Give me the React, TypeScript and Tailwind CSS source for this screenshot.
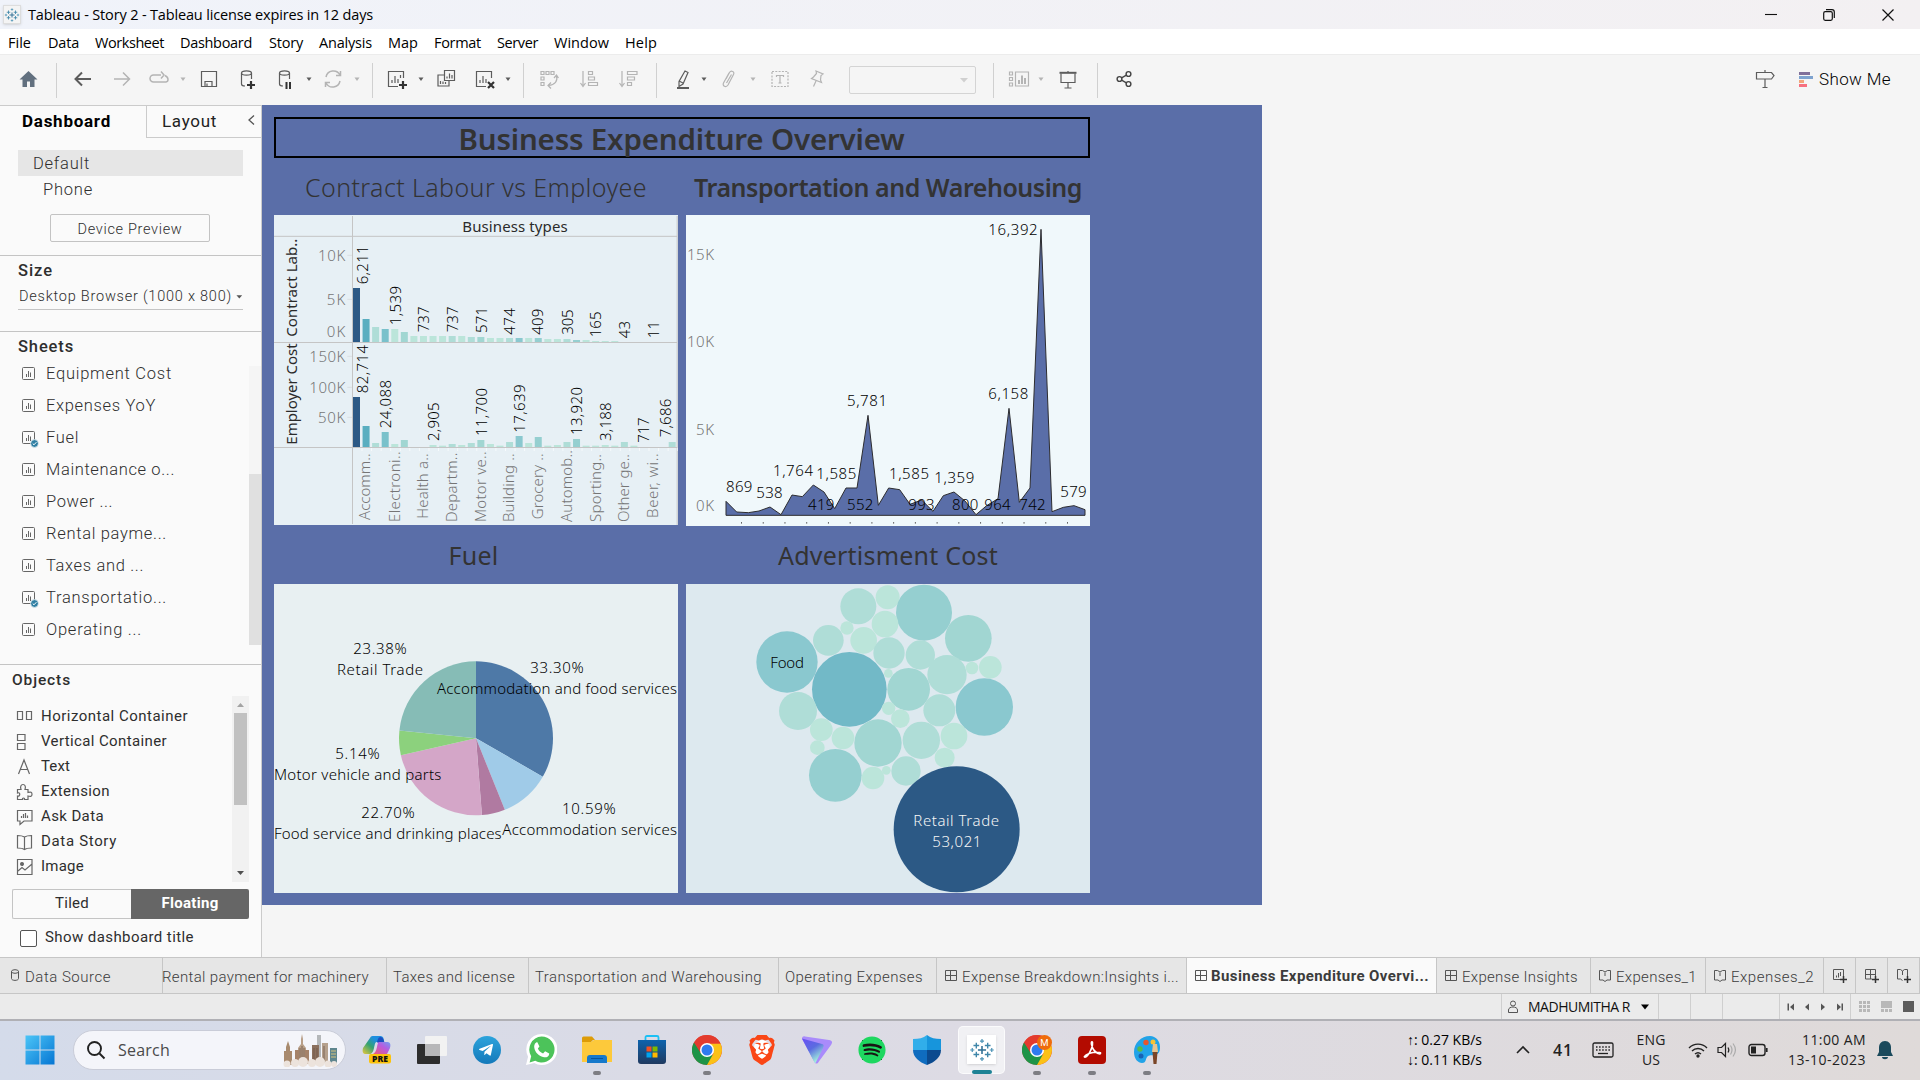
import React, { useLayoutEffect, useRef, useState } from "react";
import { FaSpotify, FaTelegramPlane } from "react-icons/fa";
import { SiBrave } from "react-icons/si";

/* Single-line label whose tracking is adjusted so that it fills `w` pixels. */
function Fit({ w, className = "", children }: { w: number; className?: string; children: string }) {
  const ref = useRef<HTMLSpanElement>(null);
  const [spacing, setSpacing] = useState(0);
  useLayoutEffect(() => {
    const el = ref.current;
    if (!el) return;
    el.style.letterSpacing = "0px";
    const natural = el.getBoundingClientRect().width;
    const s = (w - natural) / children.length;
    el.style.letterSpacing = `${s}px`;
    setSpacing(s);
  }, [w, children]);
  return (
    <span ref={ref} className={`inline-block shrink-0 whitespace-nowrap ${className}`} style={{ letterSpacing: spacing }}>
      {children}
    </span>
  );
}

/* ---------- toolbar ---------- */

function Ico({ ml, dim, children }: { ml: string; dim?: boolean; children: React.ReactNode }) {
  return (
    <svg
      viewBox="0 0 24 24"
      className={`mb-0.5 h-6 w-6 shrink-0 ${ml} ${dim ? "text-[#b4b4b4]" : "text-[#5c5c5c]"}`}
      fill="none"
      stroke="currentColor"
      strokeWidth="1.2"
    >
      {children}
    </svg>
  );
}

function Caret({ ml, dim }: { ml: string; dim?: boolean }) {
  return (
    <svg viewBox="0 0 8 8" className={`mb-0.5 h-2 w-2 shrink-0 ${ml} ${dim ? "text-[#b4b4b4]" : "text-[#5c5c5c]"}`}>
      <path d="M1.500 2.500h5L4 6z" fill="currentColor" />
    </svg>
  );
}

function Sep({ ml }: { ml: string }) {
  return <div className={`h-[35px] w-px shrink-0 bg-[#d0d0d0] ${ml}`} />;
}

function Cylinder() {
  return (
    <>
      <ellipse cx="11.500" cy="6" rx="5" ry="2.200" />
      <path d="M6.500 6v11c0 1.500 1.500 2 3.500 2M16.500 6v6" />
    </>
  );
}

function Toolbar() {
  return (
    <div className="flex h-[51px] shrink-0 items-center border-t border-[#ececec] bg-[#f5f5f5]">
      <svg viewBox="0 0 24 24" className="mb-0.5 ml-4 h-6 w-6 shrink-0">
        <path d="M12.500 4l9 8.500h-3v7.500h-4.500v-5.500h-3v5.500H6.500v-7.500h-3z" fill="#62707f" />
      </svg>
      <Sep ml="ml-4" />
      <Ico ml="ml-3.5"><path strokeWidth="2" d="M20 12H5M11 5.500L4.500 12l6.500 6.500" /></Ico>
      <Ico ml="ml-[15px]" dim><path strokeWidth="1.500" d="M4 12h15M13 5.500l6.500 6.500-6.500 6.500" /></Ico>
      <Ico ml="ml-[13px]" dim><path strokeWidth="1.500" d="M14 8H6.500a3.500 3.500 0 000 7h12.500a2.500 2.500 0 002-2.500c0-2-1-3-3-4M14 4.500L17 8l-3 3.500" /></Ico>
      <Caret ml="ml-2" dim />
      <Ico ml="ml-2.5"><path d="M4.500 4.500h15v15h-15zM8 19v-4.500h7V19M10 16.500V19" /></Ico>
      <Ico ml="ml-[14px]"><Cylinder /><path strokeWidth="2.200" stroke="#333" d="M16 14v8M12 18h8" /></Ico>
      <Ico ml="ml-3.5"><Cylinder /><path strokeWidth="2" stroke="#333" d="M13.500 15v7M17 15v7" /></Ico>
      <Caret ml="ml-[8px]" />
      <Ico ml="ml-2" dim><path strokeWidth="1.500" d="M5 10a7.500 7.500 0 0114-2M19 14a7.500 7.500 0 01-14 2M19.500 4v4.500H15M4.500 20v-4.500H9" /></Ico>
      <Caret ml="ml-2" dim />
      <Sep ml="ml-[11px]" />
      <Ico ml="ml-3"><path d="M18.500 11V4.500h-15v15H13M7 16v-3M10 16V9M13 16v-4M15.500 11V8" /><path strokeWidth="2.200" stroke="#333" d="M18 14v8M14 18h8" /></Ico>
      <Caret ml="ml-2" />
      <Ico ml="ml-[9px]"><path d="M10.500 3.500h10v10h-10zM10 8H4v11h11v-5M13 11.500v-2M15.500 11.500V6.500M18 11.500V8M6.500 17v-3M9 17v-2.500M11.500 17v-2" /></Ico>
      <Ico ml="ml-[15px]"><path d="M18.500 11V4.500h-15v15H13M7 16v-3M10 16V9M13 16v-4" /><path strokeWidth="2.200" stroke="#333" d="M15 15l6 6M21 15l-6 6" /></Ico>
      <Caret ml="ml-[7px]" />
      <Sep ml="ml-[11px]" />
      <Ico ml="ml-[13px]" dim><path d="M4 4.500h3v3H4zM9 4.500h3v3H9zM14 4.500h3v3h-3zM4 10h3v3H4zM4 15.500h3v3H4zM19.500 9c1.500 5-1.500 9-8 9.500M14 15.500l-3 3 3 3M17 11l2.500-3 2 3" /></Ico>
      <Ico ml="ml-4" dim><path d="M6 4v14M3.500 16l2.500 3.500L8.500 16M11.500 4.500h4v3h-4zM11.500 10h6v3h-6zM11.500 15.500h9v3h-9z" /></Ico>
      <Ico ml="ml-[15px]" dim><path d="M6 4v14M3.500 16l2.500 3.500L8.500 16M11.500 4.500h9.500v3h-9.500zM11.500 10h7v3h-7zM11.500 15.500h4v3h-4z" /></Ico>
      <Sep ml="ml-4" />
      <Ico ml="ml-3.5"><path d="M14 4l3 1.500-5 11.500-4 2.500v-5zM8 14l4 2" /><path strokeWidth="2" d="M6 21h12" /></Ico>
      <Caret ml="ml-[5px]" />
      <Ico ml="ml-[9px]" dim><path d="M9 12l3.500-6.500c1.500-2.500 5.500-1 4 2L11 18c-2 3-6 1-4.500-2L12 6M9.500 16l5-8.500" /></Ico>
      <Caret ml="ml-2" dim />
      <Ico ml="ml-[11px]" dim>
        <path strokeDasharray="2 1.300" d="M4 4.500h16v15H4z" />
        <path d="M8.500 10V8.500h7V10M12 8.500v7.500M10.500 16h3" />
      </Ico>
      <Ico ml="ml-[13px]" dim><path d="M11 4l7 3-2 1.500-.5 4.500 1 2.500-10-4 2-1.500 3-3.500zM11 14l-2.500 5.500" /></Ico>
      <div className="ml-5 flex h-7 w-[127px] shrink-0 items-center justify-end rounded-[2px] border border-[#d4d4d4] pr-[7px] text-[#d0d0d0]">
        <svg viewBox="0 0 8 8" className="h-2 w-2"><path d="M0 2h8L4 6.500z" fill="currentColor" /></svg>
      </div>
      <Sep ml="ml-[17px]" />
      <Ico ml="ml-[13px]" dim><path d="M2.500 5h3v3h-3zM2.500 10.500h3v3h-3zM2.500 16h3v3h-3zM8.500 5h13v14h-13z" /><path strokeWidth="2" d="M12 17v-4M15 17V8.500M18 17v-6" /></Ico>
      <Caret ml="ml-1.5" dim />
      <Ico ml="ml-[11px]"><path d="M5 6.500v9h14v-9M12 15.500V21M8.500 21h7" /><path strokeWidth="2" d="M3.500 5.800h17" /><path d="M12 4v2" /></Ico>
      <Sep ml="ml-[17px]" />
      <Ico ml="ml-3.5"><g stroke="#444" strokeWidth="1.400"><circle cx="7.500" cy="12" r="2.400" /><circle cx="16.500" cy="7" r="2.400" /><circle cx="16.500" cy="17" r="2.400" /><path d="M9.600 10.800l4.800-2.600M9.600 13.200l4.800 2.600" /></g></Ico>
      <Ico ml="ml-auto"><path d="M3.500 5.500h15l2.500 3-2.500 3.500h-15zM12 3v2.500M12 12v8.500M9.500 20.500h5" /></Ico>
      <div className="mb-0.5 ml-[22px] flex w-3.5 shrink-0 flex-col gap-px">
        <div className="h-[3px] w-[11px] bg-[#80709a]" />
        <div className="h-[3px] w-3.5 bg-[#7ea3cf]" />
        <div className="h-[3px] w-[5px] bg-[#f2a57a]" />
        <div className="h-[3px] w-2 bg-[#f7707f]" />
      </div>
      <Fit w={72} className="mb-px ml-1.5 mr-[29px] font-[Roboto] text-[17px] font-light text-black">Show Me</Fit>
    </div>
  );
}

/* ---------- side panel ---------- */

const sheets: [string, number, boolean?][] = [
  ["Equipment Cost", 126],
  ["Expenses YoY", 110],
  ["Fuel", 33, true],
  ["Maintenance o...", 129],
  ["Power ...", 67],
  ["Rental payme...", 121],
  ["Taxes and ...", 98],
  ["Transportatio...", 121, true],
  ["Operating ...", 96],
];

function SheetIcon({ used }: { used?: boolean }) {
  return (
    <svg viewBox="0 0 18 18" className="h-[18px] w-[18px] shrink-0" fill="none" stroke="#666">
      <rect x="1.500" y="1.500" width="12" height="12" rx="1" />
      <path d="M5.500 11V8M7.500 11V5M9.500 11V6.500" />
      {used && (
        <>
          <circle cx="13.500" cy="13.500" r="3.900" fill="#2f7fa3" stroke="#fafafa" strokeWidth="0.700" />
          <path d="M11.700 13.500l1.300 1.300 2.400-2.600" stroke="#fff" />
        </>
      )}
    </svg>
  );
}

const objects: [string, number, React.ReactNode][] = [
  ["Horizontal Container", 147, <path key="h" d="M1.500 3.500h5v8h-5zM10.500 3.500h5v8h-5z" />],
  ["Vertical Container", 126, <path key="v" d="M1.500 1.500h7.500v6h-7.500zM1.500 10.500h7.500v6h-7.500z" />],
  ["Text", 29, <path key="t" d="M2.500 16L8 2l5.500 14M4.500 11.500h7" />],
  ["Extension", 69, <path key="e" d="M1.500 6.500H5c-1-3 0-5 2-5s3 2 2 5h3v3c3-1 4 0 4 1.800s-1 2.700-4 1.700v3.500H8.500c.5-2-2.500-2-2 0h-5v-3.500c3 1 3-4.500 0-3z" />],
  ["Ask Data", 63, <path key="a" d="M1.500 2.500h14.500v10.500H8l-4 3.500V13H1.500zM5.500 10V8M7.500 10V6M9.500 10V5M11.500 10V7.500" />],
  ["Data Story", 76, <path key="d" d="M8.500 4v12M8.500 4C6 2.500 4 2.500 1.500 2.500V15c3 0 5 0 7 1.500 2-1.500 4-1.500 7-1.500V2.500c-2.500 0-4.500 0-7 1.500z" />],
  ["Image", 43, <g key="i"><path d="M1.500 1.500h14.500v15H1.500zM2 13l4-3.500 3 2.500 7-6" /><circle cx="6" cy="6" r="1.400" fill="#666" /></g>],
];

function SidePanel() {
  return (
    <div className="flex h-[852px] w-[262px] shrink-0 flex-col border-r border-t border-[#cbcbcb] bg-[#fafafa] font-[Roboto] text-[#2e2e2e]">
      <div className="flex h-8 shrink-0">
        <div className="w-[146px] pl-[22px] pt-[3px]">
          <Fit w={89} className="text-[17px] font-bold leading-6 text-black">Dashboard</Fit>
        </div>
        <div className="flex flex-1 items-center border-b border-l border-[#cbcbcb] pl-[15px]">
          <Fit w={55} className="mt-px text-[17px] font-normal text-[#222]">Layout</Fit>
          <svg viewBox="0 0 8 12" className="mb-1 ml-[30px] h-3 w-2" fill="none" stroke="#555" strokeWidth="1.300"><path d="M7 1.500L2 6l5 4.500" /></svg>
        </div>
      </div>
      <div className="ml-[18px] mt-3 flex h-[26px] w-[225px] shrink-0 items-center bg-[#e6e6e6] pl-[15px] pt-[2px]">
        <Fit w={57} className="text-[16.500px] font-light">Default</Fit>
      </div>
      <div className="flex h-[26px] shrink-0 items-center pl-[43px] pt-[2px]">
        <Fit w={50} className="text-[16.500px] font-light">Phone</Fit>
      </div>
      <div className="ml-[50px] mt-3 flex h-7 w-40 shrink-0 items-center justify-center rounded-[2px] border border-[#c3c3c3] pt-[3px]">
        <Fit w={105} className="text-[14.500px] font-light">Device Preview</Fit>
      </div>
      <div className="mt-[13px] flex h-[76px] shrink-0 flex-col border-t border-[#c4c4c4] pl-[18px] pt-1">
        <Fit w={35} className="self-start text-[16.500px] font-medium leading-[22px]">Size</Fit>
        <div className="mt-[1px] flex h-[27px] w-[225px] items-center border-b border-[#c4c4c4] pl-px pt-[2px]">
          <Fit w={213} className="text-[14.500px] font-light">Desktop Browser (1000 x 800)</Fit>
          <svg viewBox="0 0 8 8" className="ml-1 h-2 w-2"><path d="M0.500 2h6.500L3.800 5.800z" fill="#555" /></svg>
        </div>
      </div>
      <div className="flex h-[333px] shrink-0 border-t border-[#c4c4c4]">
        <div className="w-[249px] pl-[18px] pt-[3px]">
          <Fit w={56} className="block text-[16.500px] font-medium leading-[22px]">Sheets</Fit>
          <div className="mt-[-1px] flex flex-col">
            {sheets.map(([name, w, used]) => (
              <div key={name} className="flex h-8 items-center pl-[3px]">
                <div className="mt-[2px]"><SheetIcon used={used} /></div>
                <Fit w={w} className="ml-[7px] text-[16.500px] font-light">{name}</Fit>
              </div>
            ))}
          </div>
        </div>
        <div className="mt-[34px] h-[279px] w-3 bg-[#f5f5f5] pt-[108px]">
          <div className="h-[171px] bg-[#e0e0e0]" />
        </div>
      </div>
      <div className="flex shrink-0 flex-col border-t border-[#c4c4c4] pl-3">
        <Fit w={59} className="mt-1 self-start text-[15.500px] font-medium leading-[22px]">Objects</Fit>
        <div className="mt-[5px] flex h-[186px]">
          <div className="flex w-[220px] flex-col pl-1 pt-[8px]">
            {objects.map(([name, w, icon]) => (
              <div key={name} className="flex h-[25px] items-center">
                <svg viewBox="0 0 18 18" className="h-[18px] w-[18px] shrink-0" fill="none" stroke="#666" strokeWidth="1.200">{icon}</svg>
                <Fit w={w} className="ml-[7px] text-[15px]">{name}</Fit>
              </div>
            ))}
          </div>
          <div className="flex w-[17px] flex-col items-center justify-between bg-[#f1f1f1]">
            <svg viewBox="0 0 17 17" className="h-[17px] w-[17px]"><path d="M5 11h7L8.500 7z" fill="#a3a3a3" /></svg>
            <div className="mb-[60px] h-[92px] w-[13px] bg-[#c1c1c1]" />
            <svg viewBox="0 0 17 17" className="h-[17px] w-[17px]"><path d="M5 6h7l-3.500 4z" fill="#505050" /></svg>
          </div>
        </div>
        <div className="mt-[7px] flex h-[30px] w-[237px]">
          <div className="flex w-[119px] items-center justify-center rounded-l-[2px] border border-r-0 border-[#c4c4c4] pb-[2px]">
            <Fit w={34} className="text-[15px]">Tiled</Fit>
          </div>
          <div className="flex flex-1 items-center justify-center rounded-r-[2px] bg-[#666] pb-[2px]">
            <Fit w={57} className="text-[15px] font-bold text-white">Floating</Fit>
          </div>
        </div>
        <div className="mt-[9px] flex h-[20px] items-center pl-2">
          <div className="h-[17px] w-[17px] rounded-[2px] border border-[#555] bg-white" />
          <Fit w={149} className="mb-px ml-2 text-[15px]">Show dashboard title</Fit>
        </div>
      </div>
    </div>
  );
}

/* ---------- charts (each drawn at three units per pixel) ---------- */

const D = "#2c5985";
const C1 = "#5aaec0";
const C2 = "#79c1cb";
const C3 = "#8ac8cf";
const C4 = "#95cfd0";
const C5 = "#a1d6d2";
const C6 = "#afddd7";
const C7 = "#bbe5da";

const barColors = [D, C1, C6, C2, C7, C5, C7, C7, C7, C7, C6, C7, C6, C5, C7, C7, C6, C3, C7, C4, C7, C7, C6, C4, C7, C7, C7, C7, C6, C7, C7, C7, C7, C6];
const contract = [162, 69, 45, 39, 39, 30, 18, 18, 18, 18, 18, 18, 15, 15, 12, 12, 12, 12, 12, 12, 9, 9, 9, 6, 6, 3, 3, 3, 0, 0, 0, 0, 0, 0];
const employer = [150, 63, 12, 45, 9, 21, 0, 0, 6, 4, 9, 6, 12, 21, 9, 4, 15, 33, 12, 30, 4, 6, 15, 24, 4, 4, 6, 4, 15, 4, 0, 0, 0, 15];

type Mark = [string, number, number, number];

const contractMarks: Mark[] = [
  ["6,211", 326, 553, 117], ["1,539", 424, 676, 118], ["737", 509, 697, 78], ["737", 596, 697, 78], ["571", 684, 699, 78],
  ["474", 766, 704, 80], ["409", 852, 704, 78], ["305", 940, 704, 76], ["165", 1025, 712, 78], ["43", 1112, 715, 52], ["11", 1200, 715, 52],
];
const employerMarks: Mark[] = [
  ["82,714", 325, 880, 145], ["24,088", 394, 985, 145], ["2,905", 539, 1023, 116], ["11,700", 684, 1008, 144], ["17,639", 797, 998, 145],
  ["13,920", 968, 1005, 144], ["3,188", 1054, 1023, 116], ["717", 1170, 1028, 76], ["7,686", 1235, 1012, 116],
];
const categories: Mark[] = [
  ["Accomm..", 333, 1260, 200], ["Electroni..", 422, 1266, 212], ["Health a..", 507, 1256, 196], ["Departm..", 594, 1266, 208],
  ["Motor ve..", 681, 1266, 212], ["Building ..", 765, 1266, 206], ["Grocery ..", 852, 1258, 198], ["Automob..", 939, 1266, 216],
  ["Sporting..", 1025, 1266, 204], ["Other ge..", 1110, 1266, 204], ["Beer, wi..", 1196, 1254, 194],
];

function Vertical({ marks, fill }: { marks: Mark[]; fill: string }) {
  return (
    <>
      {marks.map(([t, x, y, len]) => (
        <text key={`${t}-${x}`} transform={`translate(${x - 2} ${y}) rotate(-90)`} fontSize="45" textLength={len} fill={fill}>{t}</text>
      ))}
    </>
  );
}

function LabourChart() {
  return (
    <svg viewBox="42 345 1212 930" className="h-[310px] w-[404px] bg-[#e7f0f5] font-['Noto_Sans'] font-[350]">
      <g stroke="#c5c5c5" strokeWidth="3">
        <path d="M42 409H1251M42 727.500H1251M42 1042.500H1251M277.500 348V1272M1251.500 348V1275" />
      </g>
      <path d="M262 466h14M262 598h14M262 769h14M262 862h14M262 952h14" stroke="#dadfe2" strokeWidth="3" />
      {barColors.map((c, i) => <path key={i} d={`M${306 + i * 28.7} 1044v9`} stroke="#fff" strokeWidth="2" />)}
      {barColors.map((c, i) => <rect key={i} x={279 + i * 28.7} y={726 - contract[i]} width="21" height={contract[i]} fill={c} />)}
      {barColors.map((c, i) => <rect key={i} x={279 + i * 28.7} y={1041 - employer[i]} width="21" height={employer[i]} fill={c} />)}
      <text x="607" y="396" fontSize="45" className="font-[450]" fill="#2b2b2b" textLength="316">Business types</text>
      <g fontSize="45" fill="#757575" textAnchor="end">
        <text x="256" y="482" textLength="82">10K</text>
        <text x="256" y="614" textLength="56">5K</text>
        <text x="256" y="710" textLength="56">0K</text>
        <text x="256" y="785" textLength="108">150K</text>
        <text x="256" y="878" textLength="108">100K</text>
        <text x="256" y="968" textLength="82">50K</text>
      </g>
      <g fontSize="45" className="font-[450]" fill="#2b2b2b">
        <text transform="translate(111 710) rotate(-90)" textLength="294">Contract Lab..</text>
        <text transform="translate(111 1034) rotate(-90)" textLength="304">Employer Cost</text>
      </g>
      <Vertical marks={contractMarks} fill="#000" />
      <Vertical marks={employerMarks} fill="#000" />
      <Vertical marks={categories} fill="#757575" />
    </svg>
  );
}

const areaLine =
  "168,1204 200,1236 235,1238 267,1233 300,1221 333,1244 366,1185 397,1190 430,1155 462,1176 494,1226 528,1164 561,1164 594,946 625,1216 656,1164 689,1169 720,1213 755,1200 789,1234 820,1187 852,1176 885,1203 918,1244 950,1217 984,1196 1017,925 1048,1207 1080,1164 1113,388 1146,1235 1180,1222 1212,1217 1245,1229 1245,1246 168,1246";

const areaMarks: Mark[] = [
  ["16,392", 955, 405, 148], ["6,158", 955, 897, 120], ["5,781", 531, 918, 120], ["1,764", 309, 1128, 120], ["1,585", 439, 1137, 120],
  ["1,585", 657, 1137, 120], ["1,359", 793, 1149, 120], ["869", 168, 1176, 79], ["538", 259, 1194, 79], ["579", 1171, 1191, 79],
  ["419", 414, 1230, 79], ["552", 531, 1230, 79], ["993", 715, 1230, 79], ["800", 846, 1230, 79], ["964", 943, 1230, 79], ["742", 1048, 1230, 79],
];

function TransportChart() {
  return (
    <svg viewBox="48 345 1212 933" className="h-[311px] w-[404px] bg-[#f0f8fb] font-['Noto_Sans'] font-[350]">
      <polygon points={areaLine} fill="#5a6ea8" stroke="#2d2d30" strokeWidth="3" strokeLinejoin="miter" strokeMiterlimit="2" />
      <g fontSize="45" fill="#757575">
        <text x="51" y="480" textLength="81">15K</text>
        <text x="51" y="741" textLength="81">10K</text>
        <text x="78" y="1005" textLength="54">5K</text>
        <text x="78" y="1233" textLength="54">0K</text>
      </g>
      {Array.from({ length: 16 }, (_, i) => <rect key={i} x={213 + i * 65.2} y="1266" width="3" height="5" fill="#666" />)}
      {areaMarks.map(([t, x, y, len]) => <text key={`${t}-${x}`} x={x} y={y} fontSize="45" textLength={len} fill="#000">{t}</text>)}
    </svg>
  );
}

const slices: [number, string][] = [
  [33.3, "#4e79a7"], [10.59, "#a0cbe8"], [4.89, "#b07aa1"], [22.7, "#d4a6c8"], [5.14, "#8cd17d"], [23.38, "#86bcb6"],
];

function arc(start: number, share: number) {
  const p = (f: number) => {
    const a = (f / 100) * Math.PI * 2;
    return `${648 + 231 * Math.sin(a)} ${625 - 231 * Math.cos(a)}`;
  };
  return `M648 625L${p(start)}A231 231 0 0 1 ${p(start + share)}Z`;
}

const pieMarks: Mark[] = [
  ["23.38%", 280, 372, 160], ["Retail Trade", 231, 435, 258], ["33.30%", 811, 429, 160], ["Accommodation and food services", 531, 492, 720],
  ["5.14%", 226, 687, 133], ["Motor vehicle and parts", 42, 750, 502], ["22.70%", 304, 864, 160], ["Food service and drinking places", 42, 928, 683],
  ["10.59%", 906, 852, 161], ["Accommodation services", 727, 915, 524],
];

function FuelChart() {
  let start = 0;
  return (
    <svg viewBox="42 162 1212 927" className="h-[309px] w-[404px] bg-[#e8f0f2] font-['Noto_Sans'] font-[350]">
      {slices.map(([share, color]) => {
        const d = arc(start, share);
        start += share;
        return <path key={color} d={d} fill={color} />;
      })}
      {pieMarks.map(([t, x, y, len]) => <text key={t} x={x} y={y} fontSize="45" textLength={len} fill="#000">{t}</text>)}
    </svg>
  );
}

const bubbles: [number, number, number, string][] = [
  [565, 229, 54, C6], [653, 202, 36, C7], [762, 248, 84, C4], [645, 282, 40, C7], [531, 294, 20, C7], [475, 331, 46, C6],
  [581, 331, 40, C7], [895, 325, 70, C5], [351, 396, 92, C3], [657, 369, 47, C6], [751, 375, 44, C6], [831, 434, 59, C6],
  [906, 414, 19, C7], [961, 412, 34, C7], [538, 478, 112, "#72b9c7"], [655, 430, 13, C7], [716, 478, 64, C5], [943, 531, 86, C3],
  [384, 543, 57, C6], [808, 541, 48, C6], [656, 535, 20, C7], [691, 566, 28, C7], [454, 599, 34, C7], [519, 624, 34, C7],
  [442, 653, 22, C7], [624, 639, 71, C5], [754, 631, 56, C6], [852, 618, 40, C7], [824, 683, 30, C7], [496, 736, 79, C4],
  [609, 744, 34, C7], [649, 721, 13, C7], [708, 723, 44, C6], [860, 898, 189, D],
];

function AdvertChart() {
  return (
    <svg viewBox="48 162 1212 927" className="h-[309px] w-[404px] bg-[#dde9ef] font-['Noto_Sans'] font-[350]">
      {bubbles.map(([x, y, r, c]) => <circle key={`${x}-${y}`} cx={x} cy={y} r={r} fill={c} />)}
      <text x="301" y="414" fontSize="45" textLength="101" fill="#000">Food</text>
      <text x="730" y="888" fontSize="45" textLength="257" fill="#f6f6f6">Retail Trade</text>
      <text x="787" y="951" fontSize="45" textLength="147" fill="#f6f6f6">53,021</text>
    </svg>
  );
}

function DashboardCanvas() {
  return (
    <div className="h-[800px] w-[1000px] shrink-0 bg-[#5a6ea8] pl-3 pt-3 font-['Noto_Sans'] text-[#333]">
      <div className="flex h-[41px] w-[816px] items-center justify-center border-2 border-black pr-px pt-[3px]">
        <Fit w={446} className="text-[29.500px] font-semibold leading-none">Business Expenditure Overview</Fit>
      </div>
      <div className="grid w-[816px] grid-cols-[404px_404px] gap-x-2">
        <div className="flex h-[57px] items-center justify-center pt-[3px]">
          <Fit w={342} className="text-[25px] font-light">Contract Labour vs Employee</Fit>
        </div>
        <div className="flex h-[57px] items-center justify-center pt-[3px]">
          <Fit w={388} className="text-[25px] font-semibold">Transportation and Warehousing</Fit>
        </div>
        <LabourChart />
        <TransportChart />
        <div className="flex h-[58px] items-center justify-center pr-[5px] pt-px">
          <Fit w={50} className="text-[25px]">Fuel</Fit>
        </div>
        <div className="flex h-[58px] items-center justify-center pt-px">
          <Fit w={220} className="text-[25px]">Advertisment Cost</Fit>
        </div>
        <FuelChart />
        <AdvertChart />
      </div>
    </div>
  );
}

/* ---------- worksheet tabs and status bar ---------- */

function GridGlyph() {
  return (
    <svg viewBox="0 0 12 12" className="h-3 w-3 shrink-0" fill="none" stroke="#555"><path d="M0.500 0.500h11v10h-11zM5.500 0.500V10.500M0.500 5.500h11" /></svg>
  );
}
function BookGlyph() {
  return (
    <svg viewBox="0 0 12 12" className="h-3 w-3 shrink-0" fill="none" stroke="#555"><path d="M0.500 0.500h3l2.500 1.500L8.500 0.500h3v9.500H8l-2 1.500L4 10H0.500zM6 2.500v3.500" /></svg>
  );
}

function Tab({ width, children, active }: { width: string; children: React.ReactNode; active?: boolean }) {
  return (
    <div className={`flex h-full shrink-0 items-center border-r border-[#c6c6c6] ${width} ${active ? "bg-[#fafafa]" : ""}`}>{children}</div>
  );
}

function SheetTabs() {
  return (
    <div className="flex h-[37px] shrink-0 border-y border-[#c6c6c6] bg-[#e6e6e6] font-[Roboto] text-[15px] font-light text-[#3c3c3c]">
      <Tab width="w-[163px]">
        <svg viewBox="0 0 10 12" className="mb-px ml-[10px] h-3 w-2.5" fill="none" stroke="#555"><ellipse cx="5" cy="2.500" rx="3.500" ry="1.800" /><path d="M1.500 2.500v7c0 2.500 7 2.500 7 0v-7" /></svg>
        <Fit w={86} className="ml-[5px] mt-[3px]">Data Source</Fit>
      </Tab>
      <Tab width="w-[224px]"><Fit w={207} className="-ml-px mt-[3px]">Rental payment for machinery</Fit></Tab>
      <Tab width="w-[142px]"><Fit w={122} className="ml-[6px] mt-[3px]">Taxes and license</Fit></Tab>
      <Tab width="w-[250px]"><Fit w={227} className="ml-[6px] mt-[3px]">Transportation and Warehousing</Fit></Tab>
      <Tab width="w-[158px]"><Fit w={138} className="ml-[6px] mt-[3px]">Operating Expenses</Fit></Tab>
      <Tab width="w-[250px]"><div className="ml-[8px] mr-[5px]"><GridGlyph /></div><Fit w={217} className="mt-[3px]">Expense Breakdown:Insights i...</Fit></Tab>
      <Tab width="w-[250px]" active><div className="ml-[8px] mr-[4px]"><GridGlyph /></div><Fit w={218} className="mt-[2px] font-bold">Business Expenditure Overvi...</Fit></Tab>
      <Tab width="w-[154px]"><div className="ml-[8px] mr-[5px]"><GridGlyph /></div><Fit w={116} className="mt-[3px]">Expense Insights</Fit></Tab>
      <Tab width="w-[115px]"><div className="ml-[8px] mr-[5px]"><BookGlyph /></div><Fit w={81} className="mt-[3px]">Expenses_1</Fit></Tab>
      <Tab width="w-[118px]"><div className="ml-[8px] mr-[5px]"><BookGlyph /></div><Fit w={83} className="mt-[3px]">Expenses_2</Fit></Tab>
      <Tab width="w-8"><NewGlyph d="M12.500 9V2.500h-10v10H9M5.500 10.500v-2M7.500 10.500V6M9.500 9V5" /></Tab>
      <Tab width="w-8"><NewGlyph d="M12.500 9V2.500h-10v9.500H9M7.500 2.500V12M2.500 7.500H12.500" /></Tab>
      <Tab width="w-8"><NewGlyph d="M2.500 2.500h3L7.500 4l2-1.500h3V9M2.500 2.500V12h3l2 1.500M7.500 4v4" /></Tab>
    </div>
  );
}

function NewGlyph({ d }: { d: string }) {
  return (
    <svg viewBox="0 0 17 17" className="ml-[7px] h-[17px] w-[17px]" fill="none" stroke="#555"><path d={d} /><path d="M12.500 9v7M9 12.500h7" stroke="#333" strokeWidth="1.500" /></svg>
  );
}

function StatusBar() {
  return (
    <div className="flex h-[27px] shrink-0 items-center border-b-2 border-[#b0b0b5] bg-[#ebebeb]">
      <div className="ml-auto flex h-full w-[158px] items-center border-x border-[#cfcfcf] pl-[5px]">
        <svg viewBox="0 0 12 14" className="h-3.5 w-3" fill="none" stroke="#555"><circle cx="6" cy="3.500" r="2.500" /><path d="M1.500 12.500V10c0-4 9-4 9 0v2.500z" /></svg>
        <Fit w={102} className="ml-[9px] font-['Open_Sans'] text-[14px] text-[#111]">MADHUMITHA R</Fit>
        <svg viewBox="0 0 8 8" className="ml-[11px] h-2 w-2"><path d="M0 1.500h8L4 6.500z" fill="#000" /></svg>
      </div>
      <div className="h-full w-8 border-r border-[#cfcfcf]" />
      <div className="h-full w-8 border-r border-[#cfcfcf]" />
      <div className="h-full w-[57px] border-r border-[#cfcfcf]" />
      <div className="flex h-full w-[71px] items-center gap-1 border-r border-[#cfcfcf] pl-[5px]">
        <svg viewBox="0 0 12 12" className="h-3 w-3"><path d="M2.500 2.500h1.500v7H2.500zM9 2.500v7L5 6z" fill="#555" /></svg>
        <svg viewBox="0 0 12 12" className="h-3 w-3"><path d="M8 2.500v7L4 6z" fill="#555" /></svg>
        <svg viewBox="0 0 12 12" className="h-3 w-3"><path d="M4 2.500v7L8 6z" fill="#555" /></svg>
        <svg viewBox="0 0 12 12" className="h-3 w-3"><path d="M8.500 2.500H10v7H8.500zM4 2.500v7L8 6z" fill="#555" /></svg>
      </div>
      <div className="flex w-[69px] items-center gap-[11px] pl-2">
        <div className="grid grid-cols-3 gap-px">
          {Array.from({ length: 9 }, (_, i) => <div key={i} className="h-[3px] w-[3px] bg-[#b8b8b8]" />)}
        </div>
        <div className="flex flex-col gap-px">
          <div className="h-[7px] w-[11px] bg-[#b8b8b8]" />
          <div className="flex gap-px">
            <div className="h-[3px] w-[3px] bg-[#b8b8b8]" /><div className="h-[3px] w-[3px] bg-[#b8b8b8]" /><div className="h-[3px] w-[3px] bg-[#b8b8b8]" />
          </div>
        </div>
        <div className="h-[11px] w-[11px] bg-[#5c5c5c]" />
      </div>
    </div>
  );
}

/* ---------- taskbar ---------- */

function TableauMark() {
  const big = "M16 11v10M11 16h10";
  const mid = "M9 7v7M5.500 10.500h7M23 7v7M19.500 10.500h7M9 18v7M5.500 21.500h7M23 18v7M19.500 21.500h7";
  const small = "M16 2.500v5M13.500 5h5M16 24.500v5M13.500 27h5M4 13.500v5M1.500 16h5M28 13.500v5M25.500 16h5";
  return (
    <>
      <path d={big} stroke="#2f6f94" strokeWidth="1.900" />
      <path d={mid} stroke="#3f86a9" strokeWidth="1.700" />
      <path d={small} stroke="#4c93b6" strokeWidth="1.500" />
    </>
  );
}

function Chrome({ badge }: { badge?: boolean }) {
  return (
    <svg viewBox="0 0 30 30" className="h-[30px] w-[30px]">
      <circle cx="15" cy="15" r="15" fill="#ea4335" />
      <path d="M15 15L2 7.500A15 15 0 0015 30l7.500-7.500z" fill="#1e9447" />
      <path d="M15 8.500h13.500A15 15 0 0115 30l6.500-11.500z" fill="#fbc116" />
      <path d="M2 7.500A15 15 0 0128.500 8.500H15L9 18.500z" fill="#e33b2e" />
      <circle cx="15" cy="15" r="7" fill="#fff" />
      <circle cx="15" cy="15" r="5.500" fill="#2f7bee" />
      {badge && (
        <>
          <circle cx="22.500" cy="7.500" r="7.500" fill="#ef6c0c" />
          <text x="22.500" y="11" fontSize="9.500" textAnchor="middle" fill="#fff" className="font-[Roboto]">M</text>
        </>
      )}
    </svg>
  );
}

function Skyline() {
  return (
    <svg viewBox="0 0 58 34" className="h-[34px] w-[58px]">
      <path d="M5 14l2-6 2 6v4h2v14H3V18h2z" fill="#a88a6e" />
      <path d="M20 6l1-5 1 5v5l3 4v16h-8V15l3-4z" fill="#b89f88" />
      <path d="M14 17h4v14h-4zM24 17h4v14h-4z" fill="#a5836a" />
      <path d="M36 2h4v29h-4z" fill="#b5b8ba" />
      <path d="M31 12h7v19h-7z" fill="#8b705e" />
      <path d="M41 10h6v20h-6z" fill="#b5a08c" />
      <path d="M49 15h7v16h-7z" fill="#5f868e" />
      <path d="M50 18h5M50 21h5M50 24h5" stroke="#d7c27d" />
      <path d="M19 15v12M21 13v14M23 15v12M33 15v12M36 15v12M43 13v14" stroke="#6f5747" strokeWidth="0.800" />
      <g fill="#ece3dc"><circle cx="6" cy="31" r="3.500" /><circle cx="14" cy="30" r="4" /><circle cx="22" cy="29" r="5" /><circle cx="31" cy="30" r="4" /><circle cx="39" cy="29" r="5" /><circle cx="47" cy="31" r="3.500" /><circle cx="53" cy="31" r="3" /></g>
    </svg>
  );
}

function Pinned({ children, dot, active }: { children: React.ReactNode; dot?: boolean; active?: boolean }) {
  return (
    <div className="flex h-[57px] w-[55px] shrink-0 items-center justify-center">
      <div className={`relative flex h-12 w-[47px] items-center justify-center rounded-[5px] ${active ? "border border-white/70 bg-white/60" : ""}`}>
        {children}
        {dot && <div className="absolute -bottom-px h-1 w-2 rounded-full bg-[#7d7d83]" />}
        {active && <div className="absolute -bottom-px h-1 w-5 rounded-full bg-[#1d8295]" />}
      </div>
    </div>
  );
}

function Taskbar() {
  return (
    <div className="flex h-[59px] shrink-0 items-center bg-gradient-to-r from-[#d4dbea] via-[#dddbe4] to-[#dfdad9] pb-[2px] font-['Open_Sans'] text-[#222]">
      <svg viewBox="0 0 30 30" className="ml-[25px] mt-px h-[30px] w-[30px]">
        <defs><linearGradient id="win" x1="0" y1="0" x2="1" y2="1" gradientUnits="objectBoundingBox"><stop stopColor="#4cc5f7" /><stop offset="1" stopColor="#0676d3" /></linearGradient></defs>
        <path d="M0.500 0.500h14v14h-14zM15.500 0.500h14v14h-14zM0.500 15.500h14v14h-14zM15.500 15.500h14v14h-14z" fill="url(#win)" />
      </svg>
      <div className="ml-[18px] flex h-10 w-[273px] shrink-0 items-center rounded-full border border-[#c9ccd8] bg-[#f4f5fa] pl-[12px] pr-[6px]">
        <svg viewBox="0 0 20 20" className="h-5 w-5" fill="none" stroke="#222" strokeWidth="1.900"><circle cx="8.500" cy="8.500" r="6.500" /><path d="M13.500 13.500l5 5" /></svg>
        <Fit w={52} className="ml-[12px] text-[16px] text-[#4a4a4a]">Search</Fit>
        <div className="ml-auto"><Skyline /></div>
      </div>
      <div className="ml-[3px] flex">
        <Pinned>
          <svg viewBox="0 0 30 30" className="h-[30px] w-[30px]">
            <defs>
              <linearGradient id="cpa" x1="0" y1="1" x2="1" y2="0"><stop stopColor="#e9c83d" /><stop offset=".4" stopColor="#36a36f" /><stop offset=".7" stopColor="#1d8ee0" /></linearGradient>
              <linearGradient id="cpb" x1="0" y1="1" x2="1" y2="0"><stop stopColor="#ee5b78" /><stop offset=".6" stopColor="#b65ce0" /><stop offset="1" stopColor="#6ea1f2" /></linearGradient>
            </defs>
            <path d="M8 3c1-2 2-2 4-2h6c3 0 4 2 4 6h-7c-2 0-2 2-3 6s-2 6-5 6H4c-3 0-4-2-3-6z" fill="url(#cpa)" />
            <path d="M15 7l1-3c1-3 5-3 6 2l1 3h-6z" fill="#1c4fc0" />
            <path d="M17 7h8c3 0 4 2 3 6l-3 6H11c2-1 3-3 4-7 .5-3 1-5 2-5z" fill="url(#cpb)" />
            <rect x="7" y="19" width="22" height="9.500" rx="2" fill="#fcc30b" />
            <text x="18" y="27" fontSize="8.500" textAnchor="middle" textLength="16" className="font-['Noto_Sans'] font-black" fill="#111">PRE</text>
          </svg>
        </Pinned>
        <Pinned>
          <svg viewBox="0 0 30 30" className="h-[30px] w-[30px]">
            <rect x="0" y="9" width="23" height="20" rx="1" fill="#2d2d2d" /><rect x="8" y="1" width="22" height="20" rx="1" fill="#f2f2f2" /><rect x="8" y="9" width="15" height="12" fill="#b7b7b9" />
          </svg>
        </Pinned>
        <Pinned><div className="flex h-7 w-7 items-center justify-center rounded-full bg-gradient-to-b from-[#2ca3dc] to-[#1479ba]"><FaTelegramPlane className="mr-[2px] h-4 w-4 text-white" /></div></Pinned>
        <Pinned>
          <svg viewBox="0 0 30 30" className="h-[31px] w-[31px]">
            <path d="M15 0a15 15 0 11-7 28L0 30l2-8A15 15 0 0115 0z" fill="#fff" />
            <path d="M15 2.500a12.500 12.500 0 11-6 23.400L3.500 27.500 5 21.500A12.500 12.500 0 0115 2.500z" fill="#4cc35a" />
            <path d="M11 8l2 4-1.500 2c1 2.500 2.500 3.800 5 4.800l2-2 4 2c0 3-3 4.200-5 3.700-5-1-9-5-9.500-9.500C7.700 10.500 9 8 11 8z" fill="#fff" />
          </svg>
        </Pinned>
        <Pinned dot>
          <svg viewBox="0 0 30 28" className="h-7 w-[30px]">
            <path d="M0 2a1.500 1.500 0 011.500-1.500H10l3 3.500h-2l-3 3H0z" fill="#dd9c08" /><path d="M0 6h9l3-2h18v22H0z" fill="#fdc93b" /><path d="M5 27v-5c0-2 1-3 3-3h14c2 0 3 1 3 3v5z" fill="#1679cb" /><path d="M9 22.500h12" stroke="#07559d" />
          </svg>
        </Pinned>
        <Pinned>
          <svg viewBox="0 0 30 30" className="h-[30px] w-[30px]">
            <defs><linearGradient id="store" x1="0" y1="0" x2="0" y2="1"><stop stopColor="#0d63ad" /><stop offset="1" stopColor="#203a60" /></linearGradient></defs>
            <path d="M8.500 8V2.500c0-1 .5-1.500 1.500-1.500h10c1 0 1.500.5 1.500 1.500V8" fill="none" stroke="#1bc0f5" strokeWidth="1.800" />
            <path d="M1 5h28v21c0 2-1 3-3 3H4c-2 0-3-1-3-3z" fill="url(#store)" />
            <path d="M9.500 11.500h5v5h-5z" fill="#f25022" /><path d="M15.500 11.500h5v5h-5z" fill="#7fba00" /><path d="M9.500 17.500h5v5h-5z" fill="#00a4ef" /><path d="M15.500 17.500h5v5h-5z" fill="#ffb900" />
          </svg>
        </Pinned>
        <Pinned dot><Chrome /></Pinned>
        <Pinned>
          <div className="relative flex h-[30px] w-[26px] items-center justify-center">
            <div className="absolute h-5 w-4 rounded-full bg-white" />
            <SiBrave className="relative h-[30px] w-[30px] shrink-0 text-[#fa4616]" />
          </div>
        </Pinned>
        <Pinned>
          <svg viewBox="0 0 30 28" className="h-7 w-[30px]">
            <defs><linearGradient id="pv" x1="0" y1="0" x2="0.600" y2="1"><stop stopColor="#6a50f5" /><stop offset=".5" stopColor="#5b6ce0" /><stop offset="1" stopColor="#a5f5dc" /></linearGradient></defs>
            <path d="M0 3C0 1 1 0 3 .5L27 4c3 .5 4 2 2 5L16.500 26c-1 2-3 2-4 0z" fill="#a98bfb" />
            <path d="M0 2.500L20 8c2 .5 2 2 1 4l-7.500 15c-.5 0-1-.5-1.500-1.500z" fill="url(#pv)" />
          </svg>
        </Pinned>
        <Pinned><div className="relative flex items-center justify-center"><div className="absolute h-5 w-5 bg-[#191414]" /><FaSpotify className="relative h-7 w-7 text-[#1ed760]" /></div></Pinned>
        <Pinned>
          <svg viewBox="0 0 28 30" className="h-[30px] w-7">
            <path d="M14 0c4 3 8 4 14 4v11H14z" fill="#1795dc" /><path d="M14 0C10 3 6 4 0 4v11h14z" fill="#31aeea" /><path d="M0 15c0 7 6 12 14 15V15z" fill="#0f6cbf" /><path d="M28 15c0 7-6 12-14 15V15z" fill="#0b4a8f" />
          </svg>
        </Pinned>
        <Pinned active>
          <div className="flex h-[29px] w-[29px] items-center justify-center bg-white shadow-sm">
            <svg viewBox="0 0 32 32" className="h-[26px] w-[26px]" fill="none"><TableauMark /></svg>
          </div>
        </Pinned>
        <Pinned dot><Chrome badge /></Pinned>
        <Pinned dot>
          <svg viewBox="0 0 28 28" className="h-7 w-7">
            <rect width="28" height="28" rx="4" fill="#b30b00" />
            <path d="M6 21c2-3 8-5.500 16-4.500M6 21c3 2 9-9 8.500-14.500-.8-1.500-1.500 0-1 2 1 4.500 4 8.500 8.500 9.500 1-.8.500-1.500 0-1.500" fill="none" stroke="#fff" strokeWidth="1.600" />
          </svg>
        </Pinned>
        <Pinned dot>
          <svg viewBox="0 0 28 30" className="h-[30px] w-7">
            <path d="M17 1C8 1 1 8 1 17c0 7 4 11 8 11 5 0 3-5 6-7 4-2 12 2 12-9 0-6-4-11-10-11z" fill="#21a3e8" />
            <circle cx="7" cy="14" r="2.700" fill="#56b94a" /><circle cx="13" cy="7.500" r="2.700" fill="#e8552d" /><circle cx="20" cy="7" r="2.500" fill="#f7c436" /><circle cx="8" cy="21" r="2.500" fill="#1762b5" />
            <path d="M20 9h4l1 8h-6z" fill="#eac48e" /><path d="M19.500 17h5l-1 12h-3z" fill="#7a4527" />
          </svg>
        </Pinned>
      </div>
      <div className="ml-auto flex w-[76px] flex-col text-[14px] leading-[20px] text-black">
        <Fit w={75} className="self-start">↑: 0.27 KB/s</Fit>
        <Fit w={75} className="self-start">↓: 0.11 KB/s</Fit>
      </div>
      <svg viewBox="0 0 14 10" className="ml-[33px] h-2.5 w-3.5" fill="none" stroke="#222" strokeWidth="1.600"><path d="M1 8l6-6 6 6" /></svg>
      <Fit w={20} className="ml-[23px] text-[16px] font-semibold">41</Fit>
      <svg viewBox="0 0 22 16" className="ml-[19px] h-4 w-[22px]" fill="none" stroke="#222" strokeWidth="1.300">
        <rect x="1" y="1" width="20" height="14" rx="1.500" /><path d="M4 5h14M4 8h14" strokeDasharray="1.500 1.600" /><path d="M6 11.500h10" />
      </svg>
      <div className="ml-[22px] flex w-[30px] flex-col items-center text-[14px] leading-[20px]">
        <Fit w={29}>ENG</Fit>
        <Fit w={18}>US</Fit>
      </div>
      <svg viewBox="0 0 20 16" className="ml-[22px] h-4 w-5" fill="none" stroke="#222" strokeWidth="1.400"><path d="M1 6a12.500 12.500 0 0118 0M4 9a8.500 8.500 0 0112 0M7 12a4.500 4.500 0 016 0" /><circle cx="10" cy="14" r="1" fill="#222" /></svg>
      <svg viewBox="0 0 20 16" className="ml-[9px] h-4 w-5" fill="none" stroke="#222" strokeWidth="1.200"><path d="M1 5.500h3.500l4-4v13l-4-4H1zM11 5.500c1 1.500 1 3.500 0 5" /><path d="M13.500 3.500c2 3 2 6 0 9M16 1.500c3 4 3 9 0 13" stroke="#aaa" /></svg>
      <svg viewBox="0 0 20 14" className="ml-[11px] h-3.5 w-5" fill="none" stroke="#222" strokeWidth="1.400"><rect x="1" y="1.500" width="16" height="11" rx="2.500" /><path d="M18.700 5v4" strokeWidth="1.800" /><rect x="3" y="3.500" width="5" height="7" fill="#222" stroke="none" /></svg>
      <div className="ml-[19px] flex w-[79px] flex-col items-end text-[14px] leading-[20px]">
        <Fit w={64}>11:00 AM</Fit>
        <Fit w={78}>13-10-2023</Fit>
      </div>
      <svg viewBox="0 0 18 20" className="ml-[10px] mr-[26px] h-5 w-[18px]"><path d="M9 1c4 0 6 3 6 6.500V12l2 4H1l2-4V7.500C3 4 5 1 9 1zM6 17h6c0 3-6 3-6 0z" fill="#1b4a5c" /></svg>
    </div>
  );
}

/* ---------- window ---------- */

const menu: [string, number, string][] = [
  ["File", 23, "ml-2"], ["Data", 31, "ml-[17px]"], ["Worksheet", 69, "ml-4"], ["Dashboard", 72, "ml-4"], ["Story", 34, "ml-[17px]"],
  ["Analysis", 53, "ml-4"], ["Map", 30, "ml-4"], ["Format", 47, "ml-4"], ["Server", 41, "ml-4"], ["Window", 55, "ml-4"], ["Help", 32, "ml-4"],
];

export default function App() {
  return (
    <div className="flex h-[1080px] w-[1920px] flex-col overflow-hidden bg-[#f5f5f5]">
      <div className="flex h-[29px] shrink-0 items-center bg-gradient-to-r from-[#f0f3fa] to-[#f3f0f2] font-['Open_Sans']">
        <div className="ml-[3px] flex h-[19px] w-[18px] items-center justify-center border border-[#ddd] bg-[#f4f4f4] shadow-sm">
          <svg viewBox="0 0 32 32" className="h-4 w-4" fill="none"><TableauMark /></svg>
        </div>
        <Fit w={345} className="ml-[7px] text-[14.500px] text-black">Tableau - Story 2 - Tableau license expires in 12 days</Fit>
        <svg viewBox="0 0 12 12" className="ml-auto h-3 w-3" stroke="#111" strokeWidth="1.100"><path d="M0 5.500h12" /></svg>
        <svg viewBox="0 0 12 12" className="ml-[46px] h-3 w-3" fill="none" stroke="#111" strokeWidth="1.200"><rect x="0.700" y="2.700" width="8.600" height="8.600" rx="1.500" /><path d="M3 0.700h6a2.300 2.300 0 012.300 2.300v6" /></svg>
        <svg viewBox="0 0 12 12" className="ml-[47px] mr-[26px] h-3 w-3" stroke="#111" strokeWidth="1.200"><path d="M0.500 0.500l11 11M11.500 0.500l-11 11" /></svg>
      </div>
      <div className="flex h-[25px] shrink-0 items-center bg-white pt-[2px] font-['Open_Sans'] text-[14.500px] text-black">
        {menu.map(([name, w, ml]) => (
          <div key={name} className={ml}><Fit w={w}>{name}</Fit></div>
        ))}
      </div>
      <Toolbar />
      <div className="flex h-[852px] shrink-0">
        <SidePanel />
        <DashboardCanvas />
      </div>
      <SheetTabs />
      <StatusBar />
      <Taskbar />
    </div>
  );
}
